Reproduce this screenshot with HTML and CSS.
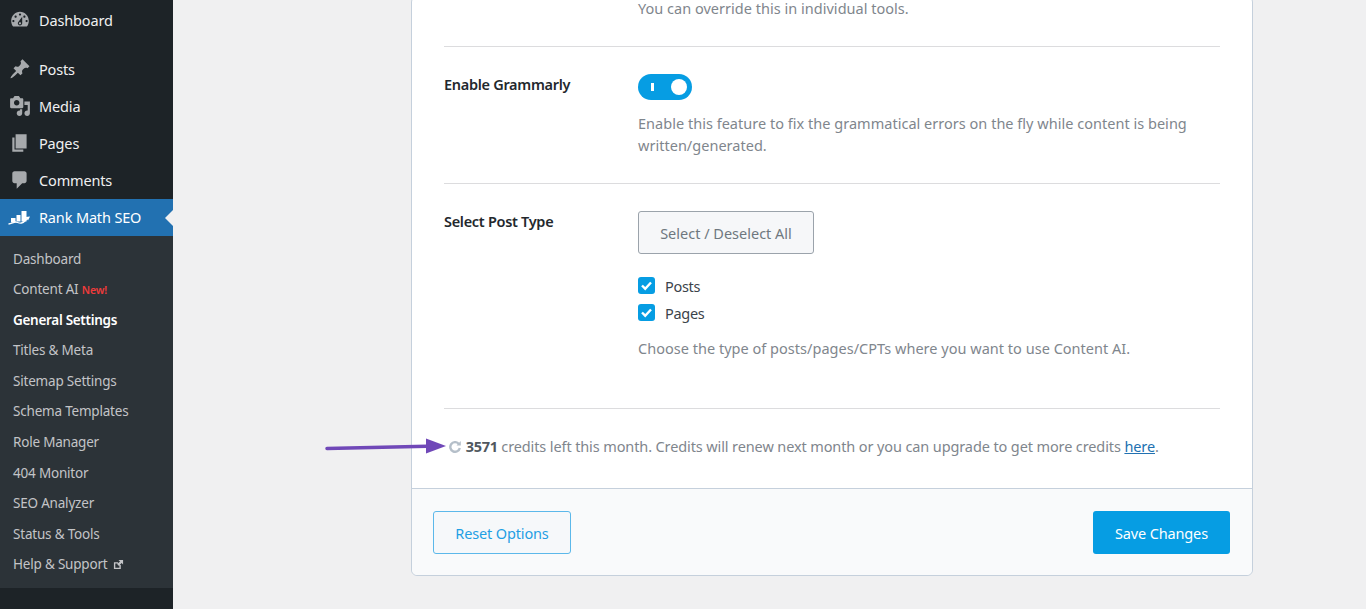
FILE: index.html
```html
<!DOCTYPE html>
<html lang="en">
<head>
<meta charset="utf-8">
<title>Content AI settings</title>
<link rel="stylesheet" href="styles.css">
</head>
<body>
<div class="page">
  <nav class="sidebar">
    <ul class="menu">
      <li class="item first"><svg class="ico" viewBox="0 0 20 20"><path d="M3.760 16h12.480c1.100-1.430 1.760-3.210 1.760-5.140 0-4.600-3.580-8.360-8-8.360s-8 3.760-8 8.360c0 1.930.66 3.710 1.760 5.140zM10 4c.55 0 1 .45 1 1s-.45 1-1 1-1-.45-1-1 .45-1 1-1zM6 6c.55 0 1 .45 1 1s-.45 1-1 1-1-.45-1-1 .45-1 1-1zm8 0c.55 0 1 .45 1 1s-.45 1-1 1-1-.45-1-1 .45-1 1-1zm-5.370 5.550L12 7v6c0 1.100-.9 2-2 2s-2-.9-2-2c0-.57.24-1.080.63-1.450zM4 10c.55 0 1 .45 1 1s-.45 1-1 1-1-.45-1-1 .45-1 1-1zm12 0c.55 0 1 .45 1 1s-.45 1-1 1-1-.45-1-1 .45-1 1-1zm-5 3c0-.55-.45-1-1-1s-1 .45-1 1 .45 1 1 1 1-.45 1-1z"/></svg><span>Dashboard</span></li>
      <li class="item gap"><svg class="ico" viewBox="0 0 20 20"><path d="M10.440 3.020l1.820-1.820 6.360 6.350-1.830 1.820c-1.050-.68-2.480-.57-3.410.36l-.75.75c-.92.93-1.040 2.350-.35 3.410l-1.830 1.820-2.410-2.410-2.800 2.790c-.42.42-3.380 2.710-3.800 2.290s1.860-3.390 2.280-3.810l2.790-2.790L4.100 9.360l1.830-1.820c1.050.69 2.480.57 3.400-.36l.75-.75c.93-.92 1.050-2.350.36-3.410z"/></svg><span>Posts</span></li>
      <li class="item"><svg class="ico" viewBox="0 0 20 20"><path d="M13 11V4c0-.55-.45-1-1-1h-1.670L9 1H5L3.670 3H2c-.55 0-1 .45-1 1v7c0 .55.45 1 1 1h10c.55 0 1-.45 1-1zM7 4.500c1.380 0 2.500 1.120 2.500 2.500S8.380 9.500 7 9.500 4.500 8.380 4.500 7 5.620 4.500 7 4.500zM14 6h5v10.500c0 1.380-1.120 2.500-2.500 2.500S14 17.880 14 16.500s1.120-2.500 2.500-2.500c.17 0 .34.020.5.050V9h-3V6zm-4 8.050V13h2v3.500c0 1.380-1.120 2.500-2.500 2.500S7 17.880 7 16.500 8.120 14 9.500 14c.17 0 .34.020.5.050z"/></svg><span>Media</span></li>
      <li class="item"><svg class="ico" viewBox="0 0 20 20"><path d="M6 15V2h10v13H6zm-1 1h8v2H3V5h2v11z"/></svg><span>Pages</span></li>
      <li class="item"><svg class="ico" viewBox="0 0 20 20"><path d="M5 2h9c1.100 0 2 .9 2 2v7c0 1.100-.9 2-2 2h-2l-5 5v-5H5c-1.100 0-2-.9-2-2V4c0-1.100.9-2 2-2z"/></svg><span>Comments</span></li>
      <li class="item active"><svg class="logo" viewBox="0 0 22 16"><path class="logo-bars" d="M3 9h4.500v4.500H3zM8.500 6H12.500v6.500H8.500zM13.500 2h5v10.500h-5z"/><path class="logo-swoosh" d="M.5 15c3-.3 5-2 7-2s3 1.500 6 1 4-3 6-5"/><path class="logo-bars" d="M17.500 8l4.500-.5-2 4z"/></svg><span>Rank Math SEO</span></li>
    </ul>
    <ul class="submenu">
      <li>Dashboard</li>
      <li>Content AI <span class="new">New!</span></li>
      <li class="current">General Settings</li>
      <li>Titles &amp; Meta</li>
      <li>Sitemap Settings</li>
      <li>Schema Templates</li>
      <li>Role Manager</li>
      <li>404 Monitor</li>
      <li>SEO Analyzer</li>
      <li>Status &amp; Tools</li>
      <li>Help &amp; Support <svg class="ext" viewBox="0 0 12 12"><path d="M1 3.500h4.500V5H2.500v4.500H7V6.500h1.500V11H1zM6 1h5v5L9.300 4.300 6.500 7.500 4.500 5.500 7.700 2.700z"/></svg></li>
    </ul>
  </nav>
  <main class="main">
    <section class="card">
      <div class="body">
        <div class="row row-intro">
          <div class="label"></div>
          <p class="desc">You can override this in individual tools.</p>
        </div>
        <div class="row row-grammarly">
          <div class="label">Enable Grammarly</div>
          <div class="field">
            <span class="toggle"><i class="bar"></i><i class="knob"></i></span>
            <p class="desc">Enable this feature to fix the grammatical errors on the fly while content is being written/generated.</p>
          </div>
        </div>
        <div class="row row-types">
          <div class="label">Select Post Type</div>
          <div class="field">
            <span class="btn-select">Select / Deselect All</span>
            <div class="checks">
              <div class="check"><svg class="box" viewBox="0 0 17 17"><rect width="17" height="17" rx="3"/><path class="tick" d="M4 8.500l3.200 3.200L13 5.500"/></svg>Posts</div>
              <div class="check"><svg class="box" viewBox="0 0 17 17"><rect width="17" height="17" rx="3"/><path class="tick" d="M4 8.500l3.200 3.200L13 5.500"/></svg>Pages</div>
            </div>
            <p class="desc">Choose the type of posts/pages/CPTs where you want to use Content AI.</p>
          </div>
        </div>
        <p class="credits"><svg class="spin" viewBox="0 0 12 12"><path d="M9.800 2.900A4.800 4.800 0 1 0 10.800 7"/><path class="head" d="M7.500 4.400H11.800V0z"/></svg> <strong>3571</strong> credits left this month. Credits will renew next month or you can upgrade to get more credits <a href="#">here</a>.</p>
      </div>
      <footer class="foot">
        <span class="btn-reset">Reset Options</span>
        <span class="btn-save">Save Changes</span>
      </footer>
    </section>
    <svg class="arrow" viewBox="0 0 122 16"><path class="shaft" d="M2 10.500L102 8.300"/><path class="point" d="M101 0.500L121 8 101 15.500z"/></svg>
  </main>
</div>
</body>
</html>
```
FILE: styles.css
```css
* { box-sizing: border-box; }
html, body { margin: 0; height: 609px; overflow: hidden; }
body { font-family: "Noto Sans", "Open Sans", sans-serif; font-size: 14.5px; background: #f0f0f1; color: #3c434a; }
.page { display: flex; height: 609px; }

.sidebar { width: 173px; flex: none; background: #1d2327; }
.menu, .submenu { list-style: none; margin: 0; padding: 0; }
.menu { padding-top: 2px; }
.item { display: flex; align-items: center; height: 37px; color: #f0f0f1; font-size: 14.5px; letter-spacing: -.15px; padding-bottom: 1px; }
.item.gap { margin-top: 12px; }
.ico { width: 22px; height: 22px; margin: 0 8px 0 9px; fill: #a7aaad; flex: none; }
.item.active { background: #2271b1; color: #fff; position: relative; }
.item.active::after { content: ""; position: absolute; right: 0; top: 11px; border: 8px solid transparent; border-right-color: #f0f0f1; border-left-width: 0; }
.logo { width: 22px; height: 16px; margin: 0 9px 0 8px; flex: none; }
.logo-bars { fill: #fff; }
.logo-swoosh { fill: none; stroke: #fff; stroke-width: 1.300; }
.submenu { background: #2c3338; height: 352px; padding-top: 7.500px; }
.submenu li { height: 30.600px; line-height: 30.600px; padding-left: 13px; color: #c3c4c7; font-size: 13.500px; letter-spacing: -.2px; white-space: nowrap; }
.submenu .current { color: #fff; font-weight: 600; letter-spacing: -.3px; }
.new { color: #ee3b3b; font-size: 10.500px; font-weight: 600; }
.ext { width: 11px; height: 11px; fill: #c3c4c7; margin-left: 2px; vertical-align: -1px; }

.main { flex: 1; display: flex; flex-direction: column; justify-content: flex-end; align-items: flex-start; padding: 0 0 33px 238px; position: relative; overflow: hidden; height: 609px; }
.card { width: 842px; flex: none; background: #fff; border: 1px solid #c5d0dc; border-radius: 6px; }
.body { padding: 0 32px; }
.row { display: flex; border-bottom: 1px solid #dcdcde; }
.label { width: 194px; flex: none; font-weight: 600; color: #23282d; font-size: 14.500px; letter-spacing: -.3px; }
.field { flex: 1; }
.desc { margin: 0; color: #7f868d; line-height: 22px; letter-spacing: .02px; }
.row-intro { padding-bottom: 27px; }
.row-grammarly { height: 137px; padding-top: 27px; }
.row-types { height: 225px; padding-top: 27px; }
.toggle { display: block; position: relative; width: 54px; height: 26px; border-radius: 13px; background: #069de3; margin-bottom: 12px; }
.bar { position: absolute; left: 12.500px; top: 9px; width: 3px; height: 8px; background: #fff; }
.knob { position: absolute; right: 5px; top: 5px; width: 16px; height: 16px; border-radius: 50%; background: #fff; }
.btn-select { display: flex; align-items: center; justify-content: center; width: 176px; height: 43px; background: #f6f7f9; border: 1px solid #9ba3ab; border-radius: 3px; color: #6f777f; }
.checks { margin: 18px 0 11px; }
.check { display: flex; align-items: center; height: 27px; color: #3c434a; letter-spacing: -.3px; }
.box { width: 17px; height: 17px; margin-right: 10px; fill: #069de3; }
.tick { fill: none; stroke: #fff; stroke-width: 2.400; }
.credits { margin: 0; height: 79px; padding-bottom: 3px; line-height: 74px; white-space: nowrap; color: #7f868d; letter-spacing: -.115px; }
.credits strong { color: #50575e; font-weight: 700; letter-spacing: -.3px; }
.credits a { color: #2271b1; }
.spin { width: 12px; height: 12px; margin: 0 1px 0 5px; vertical-align: -1px; fill: none; stroke: #b5bfc9; stroke-width: 2.400; }
.spin .head { fill: #b5bfc9; stroke: none; }
.foot { display: flex; justify-content: space-between; height: 87px; padding: 22px 22px 0 21px; background: #f9fafb; border-top: 1px solid #c5d0dc; border-radius: 0 0 6px 6px; }
.btn-reset, .btn-save { display: flex; align-items: center; justify-content: center; height: 43px; border-radius: 3px; letter-spacing: -.15px; }
.btn-reset { width: 138px; color: #1f9fe4; border: 1px solid #5cb8ea; background: #f6f8fa; }
.btn-save { width: 137px; color: #fff; background: #069de3; }

.arrow { position: absolute; left: 152px; top: 438px; width: 122px; height: 16px; }
.shaft { stroke: #7048b8; stroke-width: 3.500; stroke-linecap: round; fill: none; }
.point { fill: #7048b8; }
```
